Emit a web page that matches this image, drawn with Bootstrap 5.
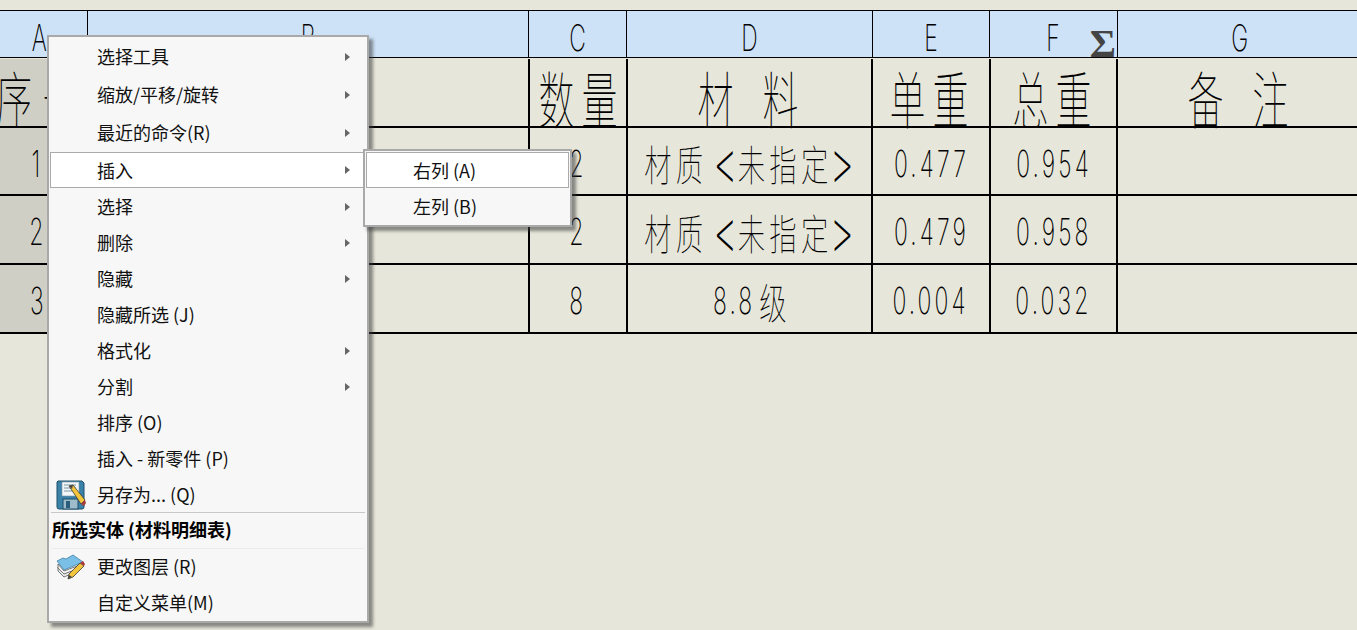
<!DOCTYPE html>
<html lang="zh">
<head>
<meta charset="utf-8">
<title>材料明细表</title>
<link href="https://cdn.jsdelivr.net/npm/bootstrap@5.3.0/dist/css/bootstrap.min.css" rel="stylesheet">
<style>
html,body{height:630px;overflow:hidden}
body{background:#e6e6da;color:#000;font-family:"Noto Sans CJK SC","Liberation Sans",sans-serif}
.sheet{padding-top:10px;position:relative}
.hdr-row,.cad-row{display:grid}
.hdr-row{grid-template-columns:88px 441px 98px 246px 117px 128px 1fr;height:48px;background:#cde2f7;border-top:1px solid #000;border-bottom:1px solid #000}
.hdr-row>div{border-right:1px solid #000;position:relative}
.hdr-row>div:last-child{border-right:0}
.cad-row{grid-template-columns:88px 442px 98px 245px 118px 127px 1fr;border-bottom:2px solid #000}
.cad-row>div{border-right:2px solid #000;overflow:visible}
.cad-row>div:last-child{border-right:0}
.cad-row>.rowhead{background:#cfcfc6;padding-right:10px}
.cad-row>.rowhead.first{padding-right:12px}
.r0{height:69px;margin-top:1px}
.r1{height:68px}
.r2{height:69px}
.r3{height:69px}
.cad{display:inline-flex;white-space:nowrap;transform-origin:center;font-weight:100}
.cad-lat{font-family:"Inter","Liberation Sans",sans-serif;font-weight:200;font-size:37px;line-height:1;transform:translateY(3px) scaleX(.62);letter-spacing:.5px}
.lat-num{font-size:37px;transform:translateY(2px) scaleX(.62);letter-spacing:5px}
.cad-big{font-size:50px;line-height:1;transform:translateY(3px) scale(.72,1.25);gap:10px}
.cad-big.wide{gap:40px}
.cad-big.apart{gap:14px}
.cad-mid{font-size:36px;line-height:1;align-items:center;transform:translateY(1px) scale(.76,1.18);letter-spacing:5.5px}
.cad-mid .open,.cad-mid .shut{font-style:normal;font-family:"Inter",sans-serif;font-weight:200;font-size:50px;line-height:.6;letter-spacing:0}
.cad-mid .open{margin:0 0 0 8px}
.cad-mid .shut{margin:0 0 0 -4px}
.cad-mid.tight{margin-left:-14px;letter-spacing:0}
.sigma{position:absolute;right:1px;bottom:-7px;font:700 40px/1 "Liberation Serif",serif;color:#444}
.cad-menu.dropdown-menu{--bs-dropdown-bg:#f7f7f7;--bs-dropdown-border-color:#a9a9a9;--bs-dropdown-border-width:2px;--bs-dropdown-border-radius:0;--bs-dropdown-padding-y:1px;--bs-dropdown-padding-x:1px;--bs-dropdown-min-width:0;position:absolute;display:block;box-shadow:4px 4px 3px rgba(60,60,60,.55);font-size:18px}
.menu-main{left:47px;top:35px;width:322px;height:588px;z-index:5}
.menu-sub{left:363px;top:149px;width:209px;height:78px;z-index:6}
.mi.dropdown-item{display:flex;align-items:center;height:36px;padding:0 0 2px 46px;color:#111;position:relative;line-height:1;border:1px solid transparent;background:transparent;letter-spacing:0}
.mi.tall{height:38px}
.mi.hot.dropdown-item{background:#fff;border-color:#aaa;margin-bottom:1px;padding-bottom:0}
.menu-sub .mi.dropdown-item{padding-left:46px}
.mi.bold.dropdown-item{padding:0 0 4px 1px;font-weight:700;color:#000;font-size:18px}
.mi .tri{position:absolute;right:15px;top:50%;margin-top:-4px;border-left:5px solid #666;border-top:4px solid transparent;border-bottom:4px solid transparent}
.mi svg{position:absolute;left:5px;top:50%;transform:translateY(-50%)}
.menu-rule.dropdown-divider{margin:-1px 1px 0;border-top:1px solid #c8c8c8;opacity:1;height:0;position:relative}
.menu-rule.faint{border-top-color:#ececec}
</style>
</head>
<body>
<div class="sheet">
  <div class="hdr-row">
    <div class="d-flex align-items-center justify-content-center pe-2"><span class="cad cad-lat">A</span></div>
    <div class="d-flex align-items-center justify-content-center"><span class="cad cad-lat">B</span></div>
    <div class="d-flex align-items-center justify-content-center"><span class="cad cad-lat">C</span></div>
    <div class="d-flex align-items-center justify-content-center"><span class="cad cad-lat">D</span></div>
    <div class="d-flex align-items-center justify-content-center"><span class="cad cad-lat">E</span></div>
    <div class="d-flex align-items-center justify-content-center"><span class="cad cad-lat">F</span><span class="sigma">Σ</span></div>
    <div class="d-flex align-items-center justify-content-center ps-1"><span class="cad cad-lat">G</span></div>
  </div>
  <div class="cad-row r0">
    <div class="rowhead first d-flex align-items-center justify-content-center"><span class="cad cad-big apart"><span>序</span><span>号</span></span></div>
    <div></div>
    <div class="d-flex align-items-center justify-content-center"><span class="cad cad-big"><span>数</span><span>量</span></span></div>
    <div class="d-flex align-items-center justify-content-center pe-1"><span class="cad cad-big wide"><span>材</span><span>料</span></span></div>
    <div class="d-flex align-items-center justify-content-center pe-1"><span class="cad cad-big"><span>单</span><span>重</span></span></div>
    <div class="d-flex align-items-center justify-content-center pe-1"><span class="cad cad-big"><span>总</span><span>重</span></span></div>
    <div class="d-flex align-items-center justify-content-center"><span class="cad cad-big wide"><span>备</span><span>注</span></span></div>
  </div>
  <div class="cad-row r1">
    <div class="rowhead d-flex align-items-center justify-content-center"><span class="cad cad-lat lat-num">1</span></div>
    <div></div>
    <div class="d-flex align-items-center justify-content-center"><span class="cad cad-lat lat-num">2</span></div>
    <div class="d-flex align-items-center justify-content-center"><span class="cad cad-mid">材质<span class="open">&lt;</span>未指定<span class="shut">&gt;</span></span></div>
    <div class="d-flex align-items-center justify-content-center"><span class="cad cad-lat lat-num">0.477</span></div>
    <div class="d-flex align-items-center justify-content-center"><span class="cad cad-lat lat-num">0.954</span></div>
    <div></div>
  </div>
  <div class="cad-row r2">
    <div class="rowhead d-flex align-items-center justify-content-center"><span class="cad cad-lat lat-num">2</span></div>
    <div></div>
    <div class="d-flex align-items-center justify-content-center"><span class="cad cad-lat lat-num">2</span></div>
    <div class="d-flex align-items-center justify-content-center"><span class="cad cad-mid">材质<span class="open">&lt;</span>未指定<span class="shut">&gt;</span></span></div>
    <div class="d-flex align-items-center justify-content-center"><span class="cad cad-lat lat-num">0.479</span></div>
    <div class="d-flex align-items-center justify-content-center"><span class="cad cad-lat lat-num">0.958</span></div>
    <div></div>
  </div>
  <div class="cad-row r3">
    <div class="rowhead d-flex align-items-center justify-content-center"><span class="cad cad-lat lat-num">3</span></div>
    <div></div>
    <div class="d-flex align-items-center justify-content-center"><span class="cad cad-lat lat-num">8</span></div>
    <div class="d-flex align-items-center justify-content-center pe-2"><span class="cad cad-lat lat-num">8.8</span><span class="cad cad-mid tight">级</span></div>
    <div class="d-flex align-items-center justify-content-center"><span class="cad cad-lat lat-num">0.004</span></div>
    <div class="d-flex align-items-center justify-content-center"><span class="cad cad-lat lat-num">0.032</span></div>
    <div></div>
  </div>

  <div class="dropdown-menu cad-menu menu-main show">
    <a class="dropdown-item mi tall" href="#">选择工具<span class="tri"></span></a>
    <a class="dropdown-item mi tall" href="#">缩放/平移/旋转<span class="tri"></span></a>
    <a class="dropdown-item mi tall" href="#">最近的命令(R)<span class="tri"></span></a>
    <a class="dropdown-item mi hot" href="#">插入<span class="tri"></span></a>
    <a class="dropdown-item mi" href="#">选择<span class="tri"></span></a>
    <a class="dropdown-item mi" href="#">删除<span class="tri"></span></a>
    <a class="dropdown-item mi" href="#">隐藏<span class="tri"></span></a>
    <a class="dropdown-item mi" href="#">隐藏所选 (J)</a>
    <a class="dropdown-item mi" href="#">格式化<span class="tri"></span></a>
    <a class="dropdown-item mi" href="#">分割<span class="tri"></span></a>
    <a class="dropdown-item mi" href="#">排序 (O)</a>
    <a class="dropdown-item mi" href="#">插入 - 新零件 (P)</a>
    <a class="dropdown-item mi" href="#">
      <svg width="30" height="30" viewBox="0 0 30 30" aria-hidden="true">
        <path d="M2 1h24l2 2v24a2 2 0 0 1-2 2H3a2 2 0 0 1-2-2V2z" fill="#3b82a8" stroke="#1d4f6b"/>
        <rect x="6" y="2" width="17" height="14" fill="#f2f6f8" stroke="#7a95a5" stroke-width=".6"/>
        <path d="M8 5h12M8 8h12M8 11h9" stroke="#7a95a5"/>
        <rect x="7" y="19" width="15" height="10" fill="#9fbccb" stroke="#1d4f6b"/>
        <rect x="10" y="21" width="4" height="7" fill="#2a5d7c"/>
        <path d="M13 6l4-1 12 15-4 4z" fill="#f2c53d" stroke="#3a3a3a" stroke-width=".8"/>
        <path d="M13 6l4-1-1 4z" fill="#444"/>
        <path d="M25 24l4-4 1 3-2 3z" fill="#a83a3a"/>
      </svg>
      另存为... (Q)
    </a>
    <div class="dropdown-divider menu-rule"></div>
    <div class="dropdown-item mi bold">所选实体 (材料明细表)</div>
    <div class="dropdown-divider menu-rule faint"></div>
    <a class="dropdown-item mi" href="#">
      <svg width="30" height="28" viewBox="0 0 30 28" aria-hidden="true">
        <path d="M2 14l6 6 14-5v3L8 24l-6-6z" fill="#e8eaea" stroke="#555" stroke-width=".8"/>
        <path d="M2 11l6 7 16-6v3L8 21l-6-6z" fill="#f5f5f5" stroke="#555" stroke-width=".8"/>
        <path d="M1 8l6-3 3 1 7-4 10 7-19 8z" fill="#79bfe6" stroke="#3f7fa3" stroke-width=".8"/>
        <path d="M12 26l1-5 11-11 4 3-11 11z" fill="#f2c53d" stroke="#3a3a3a" stroke-width=".8"/>
        <path d="M12 26l1-4 3 2z" fill="#444"/>
        <path d="M24 10l3-2 2 3-1 2z" fill="#a83a3a"/>
      </svg>
      更改图层 (R)
    </a>
    <a class="dropdown-item mi" href="#">自定义菜单(M)</a>
  </div>

  <div class="dropdown-menu cad-menu menu-sub show">
    <a class="dropdown-item mi hot" href="#">右列 (A)</a>
    <a class="dropdown-item mi" href="#">左列 (B)</a>
  </div>
</div>
<script src="https://cdn.jsdelivr.net/npm/bootstrap@5.3.0/dist/js/bootstrap.bundle.min.js"></script>
</body>
</html>
